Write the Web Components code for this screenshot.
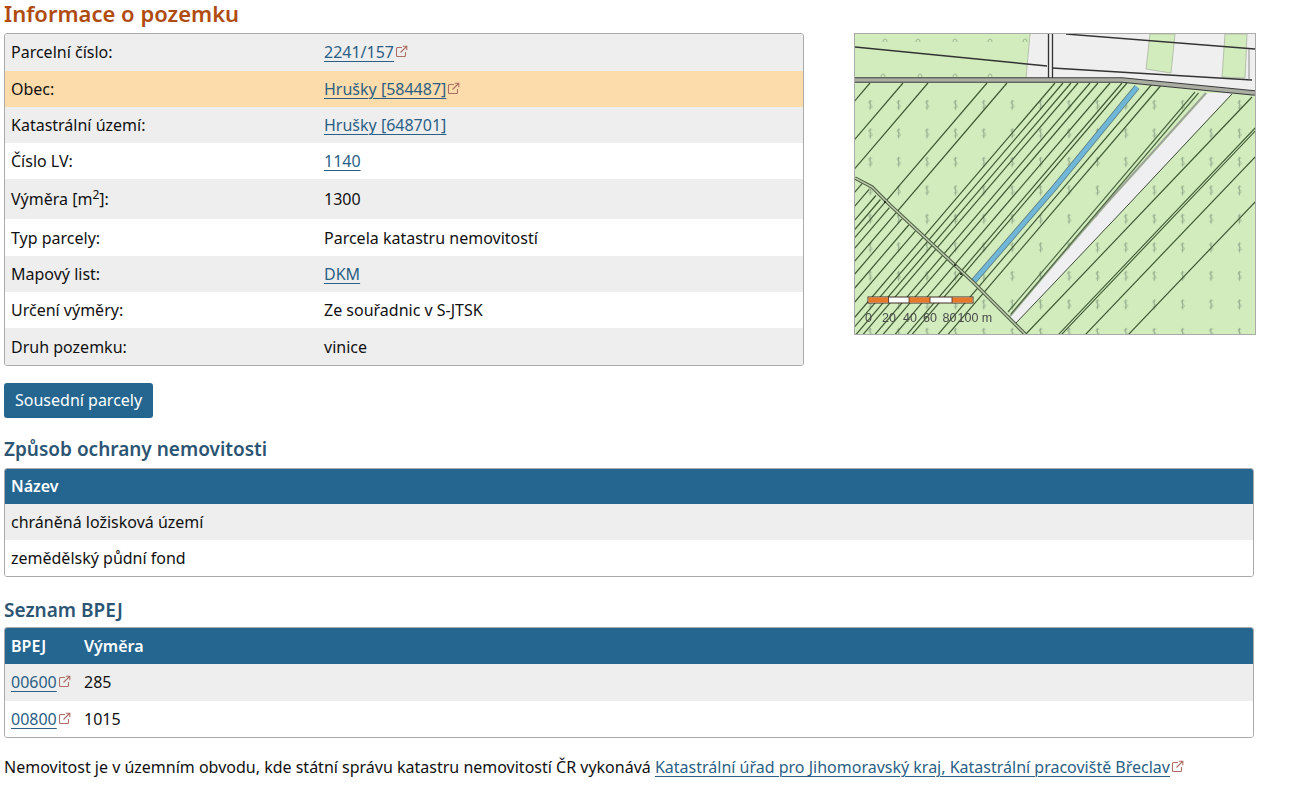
<!DOCTYPE html>
<html lang="cs">
<head>
<meta charset="utf-8">
<title>Informace o pozemku</title>
<style>
    html, body { margin: 0; background: #fff; }
    body { font-family: "Noto Sans", "Open Sans", sans-serif; font-size: 16px; color: #111; }
</style>
</head>
<body>
<parcel-page>
    <section-title slot="title" level="main">Informace o pozemku</section-title>
    <data-box slot="info" class="info">
        <data-row cols="313px 1fr" style="height:36.6px"><span>Parcelní číslo:</span><span><ext-link icon>2241/157</ext-link></span></data-row>
        <data-row cols="313px 1fr" tone="hl"><span>Obec:</span><span><ext-link icon>Hrušky [584487]</ext-link></span></data-row>
        <data-row cols="313px 1fr" tone="grey"><span>Katastrální území:</span><span><ext-link>Hrušky [648701]</ext-link></span></data-row>
        <data-row cols="313px 1fr"><span>Číslo LV:</span><span><ext-link>1140</ext-link></span></data-row>
        <data-row cols="313px 1fr" tone="grey" tall><span>Výměra [m<sup style="font-size:12px;line-height:0">2</sup>]:</span><span>1300</span></data-row>
        <data-row cols="313px 1fr"><span>Typ parcely:</span><span>Parcela katastru nemovitostí</span></data-row>
        <data-row cols="313px 1fr" tone="grey"><span>Mapový list:</span><span><ext-link>DKM</ext-link></span></data-row>
        <data-row cols="313px 1fr"><span>Určení výměry:</span><span>Ze souřadnic v S-JTSK</span></data-row>
        <data-row cols="313px 1fr" tone="grey"><span>Druh pozemku:</span><span>vinice</span></data-row>
    </data-box>
    <map-preview slot="map"></map-preview>
    <action-button slot="button">Sousední parcely</action-button>

    <section-title slot="rest" style="margin-top:19px;padding-bottom:7px">Způsob ochrany nemovitosti</section-title>
    <data-box slot="rest">
        <data-row cols="1fr" tone="head" style="height:35px"><span>Název</span></data-row>
        <data-row cols="1fr" tone="grey"><span>chráněná ložisková území</span></data-row>
        <data-row cols="1fr"><span>zemědělský půdní fond</span></data-row>
    </data-box>

    <section-title slot="rest" style="margin-top:21px;padding-bottom:5px">Seznam BPEJ</section-title>
    <data-box slot="rest">
        <data-row cols="73px 1fr" tone="head" style="height:36px"><span>BPEJ</span><span>Výměra</span></data-row>
        <data-row cols="73px 1fr" tone="grey"><span><ext-link icon>00600</ext-link></span><span>285</span></data-row>
        <data-row cols="73px 1fr"><span><ext-link icon>00800</ext-link></span><span>1015</span></data-row>
    </data-box>

    <foot-note slot="rest">Nemovitost je v územním obvodu, kde státní správu katastru nemovitostí ČR vykonává <ext-link icon>Katastrální úřad pro Jihomoravský kraj, Katastrální pracoviště Břeclav</ext-link></foot-note>
</parcel-page>

<script>
class ParcelPage extends HTMLElement {
    constructor() {
        super();
        this.attachShadow({ mode: 'open' }).innerHTML = `
            <style>
                :host { display: block; padding: 0 4px; }
                .top { display: flex; align-items: flex-start; gap: 50px; }
                .left { width: 800px; }
                .rest { width: 1250px; }
                .btn { margin-top: 17px; }
            </style>
            <slot name="title"></slot>
            <div class="top">
                <div class="left"><slot name="info"></slot></div>
                <slot name="map"></slot>
            </div>
            <div class="btn"><slot name="button"></slot></div>
            <div class="rest"><slot name="rest"></slot></div>
        `;
    }
}

class SectionTitle extends HTMLElement {
    constructor() {
        super();
        this.attachShadow({ mode: 'open' }).innerHTML = `
            <style>
                :host { display: block; font-size: 19px; line-height: 24px; height: 24px; font-weight: 600; color: #2c5573; padding-bottom: 6px; }
                :host([level="main"]) { font-size: 22px; line-height: 27px; height: 27px; color: #b04c12; }
            </style>
            <slot></slot>
        `;
    }
}

class DataBox extends HTMLElement {
    constructor() {
        super();
        this.attachShadow({ mode: 'open' }).innerHTML = `
            <style>
                :host { display: block; border: 1px solid #aaa; border-radius: 3px; overflow: hidden; }
            </style>
            <slot></slot>
        `;
    }
}

class DataRow extends HTMLElement {
    constructor() {
        super();
        this.attachShadow({ mode: 'open' }).innerHTML = `
            <style>
                :host { display: grid; align-items: center; height: 36.3px; padding: 0 6px; background: #fff; grid-template-columns: var(--cols); }
                :host([tall]) { height: 40px; }
                :host([tone="grey"]), :host(:first-child) { background: #eee; }
                :host([tone="hl"]) { background: #fddcab; }
                :host([tone="head"]) { background: #256691; color: #fff; font-weight: 600; }
            </style>
            <slot></slot>
        `;
    }
    connectedCallback() {
        this.style.setProperty('--cols', this.getAttribute('cols'));
    }
}

class ExtLink extends HTMLElement {
    constructor() {
        super();
        this.attachShadow({ mode: 'open' }).innerHTML = `
            <style>
                :host { display: inline; }
                a { color: #2b5f85; text-decoration: underline; text-underline-offset: 3px; text-decoration-thickness: 1px; cursor: pointer; }
                svg { display: none; width: 13px; height: 13px; margin-left: 1px; vertical-align: 0; }
                :host([icon]) svg { display: inline-block; }
            </style>
            <a><slot></slot></a><svg viewBox="0 0 13 13" fill="none" stroke="#ac6f66" stroke-width="1.1">
                <path d="M7 2.5H2.5a1 1 0 0 0-1 1v7a1 1 0 0 0 1 1h7a1 1 0 0 0 1-1V7"/>
                <path d="M5.5 7.5 11.5 1.5M7.8 1.2h4v4"/>
            </svg>
        `;
    }
}

class ActionButton extends HTMLElement {
    constructor() {
        super();
        this.attachShadow({ mode: 'open' }).innerHTML = `
            <style>
                :host { display: inline-block; background: #256691; color: #fff; border-radius: 3px; padding: 0 11px; line-height: 35px; height: 35px; cursor: pointer; }
            </style>
            <slot></slot>
        `;
    }
}

class FootNote extends HTMLElement {
    constructor() {
        super();
        this.attachShadow({ mode: 'open' }).innerHTML = `
            <style>
                :host { display: block; margin-top: 18px; line-height: 22px; white-space: nowrap; }
            </style>
            <slot></slot>
        `;
    }
}

class MapPreview extends HTMLElement {
    constructor() {
        super();
        // x where each parcel line meets the road (y = 83), all run down-left
        const upper = [870, 903, 928, 987, 1007, 1055, 1063, 1071, 1078, 1090, 1098, 1110, 1122, 1127, 1153, 1163];
        // plots that only start at the crossing path
        const lower = [912, 924, 936, 948, 960, 972, 980, 996, 1018, 1030, 1042];
        const s = 1.17;
        const crossY = x0 => (x0 - 587.7) / 1.966;
        const upperLines = upper.map(x => `<line x1="${x}" y1="83" x2="${(x - 252 / s).toFixed(1)}" y2="335"/>`).join('');
        const lowerLines = lower.map(x => {
            const y = crossY(x);
            return `<line x1="${(x - (y - 83) / s).toFixed(1)}" y1="${y.toFixed(1)}" x2="${(x - 252 / s).toFixed(1)}" y2="335"/>`;
        }).join('');
        const arcs = [[885, 40], [918, 40], [955, 40], [990, 40], [1025, 40], [1240, 40], [883, 75], [920, 75], [955, 75], [990, 75], [1240, 75]]
            .map(([x, y]) => `<path d="M${x - 2} ${y + 2}a2 3 0 0 1 4 0"/>`).join('');
        this.attachShadow({ mode: 'open' }).innerHTML = `
            <style>
                :host { display: block; width: 400px; height: 300px; border: 1px solid #aaa; flex: none; }
                svg { display: block; filter: blur(.4px); }
                text { font-family: "Liberation Sans", sans-serif; font-size: 12.5px; fill: #4a4a4a; }
            </style>
            <svg width="400" height="300" viewBox="855 34 400 300">
                <defs>
                    <pattern id="vine" x="856" y="91" width="28.4" height="28.5" patternUnits="userSpaceOnUse">
                        <path d="M16 10.500c-1.500-1.500-3.500-.5-3 1.200s3.200 2 3 3.700-2.500 2-3.500.6M14.200 9v10" fill="none" stroke="#8ea687" stroke-width=".8"/>
                    </pattern>
                </defs>
                <rect x="855" y="34" width="400" height="300" fill="#d2ecbe"/>
                <rect x="855" y="84" width="400" height="250" fill="url(#vine)"/>
                <g fill="none" stroke="#8ea687" stroke-width=".8">${arcs}</g>

                <path d="M1030 34H1255V92L1122 78H1026Z" fill="#efefef"/>
                <path d="M1150 34H1175L1171 73 1146 69Z M1225 34H1247L1245 78 1222 77Z" fill="#d2ecbe" stroke="#a9b5a0" stroke-width=".8"/>
                <path d="M1030 34 1026 78" stroke="#b5c2aa" stroke-width="1" fill="none"/>
                <g stroke="#333" fill="none">
                    <path d="M855 47 1047 66" stroke-width="1.4"/>
                    <path d="M1066 34 1255 49" stroke-width="1.4"/>
                    <path d="M1052 68 1252 80" stroke-width="1.4"/>
                    <path d="M1249 49V80" stroke-width=".8" stroke="#777"/>
                    <path d="M1048.500 34V78M1052.500 34V78" stroke-width="1.3"/>
                </g>

                <g stroke="#3e5a33" stroke-width="1.2" fill="none">
                    ${upperLines}
                    ${lowerLines}
                    <path d="M1252 97 1026 334"/>
                    <path d="M1257 126 1058 335M1260 126 1061 335" stroke-width="1.1"/>
                    <path d="M1256 156 1085 335"/>
                    <path d="M1256 201 1128 335"/>
                </g>

                <path d="M1208 93H1232L1128 205 1056 281 1016 323 1011 317 1055 265 1107 205Z" fill="#efeff1"/>
                <path d="M1232 94 1128 205 1056 281 1016 323" stroke="#3d4a38" stroke-width="1" fill="none"/>
                <path d="M1206 93 1105 205 1053 265 1010 316" stroke="#9ea39a" stroke-width="2" fill="none"/>
                <path d="M1195 92 1008 312M1198.500 93 1011 314" stroke="#4f6b44" stroke-width="1.2" fill="none"/>

                <path d="M1137 87 1055 187 973 282" stroke="#5d7f7d" stroke-width="6" fill="none"/>
                <path d="M1137 87 1055 187 973 282" stroke="#6fb6d8" stroke-width="4.400" fill="none"/>

                <path d="M855 80H1122L1255 93" stroke="#3a3a3a" stroke-width="5.500" fill="none"/>
                <path d="M855 80H1122L1255 93" stroke="#aaada2" stroke-width="3.500" fill="none"/>

                <path d="M855 178 872 187 890 205 973 282 1025 334" stroke="#4d5e44" stroke-width="3.600" fill="none"/>
                <path d="M855 178 872 187 890 205 973 282 1025 334" stroke="#c0cfae" stroke-width="1.500" fill="none"/>
                <g fill="#111"><circle cx="885" cy="202" r="1"/><circle cx="955" cy="265" r="1"/><circle cx="961" cy="274" r="1"/></g>

                <rect x="868" y="297" width="105" height="6" fill="#fff" stroke="#3c2a20"/>
                <g fill="#e8792b"><rect x="868.500" y="297.500" width="20" height="5"/><rect x="909" y="297.500" width="21" height="5"/><rect x="952" y="297.500" width="20.500" height="5"/></g>
                <path d="M888.500 297V303M909 297V303M930 297V303M952 297V303" stroke="#3c2a20" stroke-width=".8"/>
                <text x="865" y="322">0</text><text x="882" y="322">20</text><text x="903" y="322">40</text><text x="923" y="322">60</text><text x="942.500" y="322">80</text><text x="957.500" y="322">100 m</text>
            </svg>
        `;
    }
}

customElements.define('parcel-page', ParcelPage);
customElements.define('section-title', SectionTitle);
customElements.define('data-box', DataBox);
customElements.define('data-row', DataRow);
customElements.define('ext-link', ExtLink);
customElements.define('action-button', ActionButton);
customElements.define('foot-note', FootNote);
customElements.define('map-preview', MapPreview);
</script>
</body>
</html>
